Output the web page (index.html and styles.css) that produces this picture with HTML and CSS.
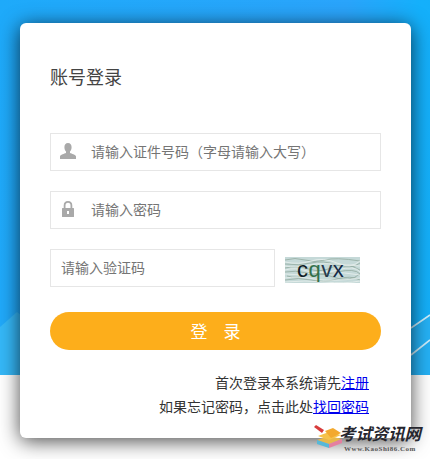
FILE: index.html
```html
<!DOCTYPE html>
<html lang="zh-CN">
<head>
    <meta charset="UTF-8">
    <meta name="viewport" content="width=device-width, initial-scale=1.0">
    <title>账号登录</title>
    <link rel="stylesheet" href="styles.css">
</head>
<body>
    <div class="page">
        <!-- Background streaks -->
        <svg class="streaks" width="430" height="375" viewBox="0 0 430 375">
            <polygon points="0,327 17,312 40,330 40,375 0,375" fill="#35b8f8"/>
            <polygon points="411,375 411,330 430,316 430,375" fill="#25b1f5"/>
            <path d="M411 328 L430 315" stroke="#cfeefc" stroke-width="1.6" fill="none"/>
            <path d="M411 355 L430 340" stroke="#cfeefc" stroke-width="1.6" fill="none"/>
        </svg>

        <div class="card">
            <h1 class="title">账号登录</h1>

            <div class="field">
                <svg class="field-icon" width="18" height="18" viewBox="0 0 18 18">
                    <path fill="#a9a9a9" d="M8 0c2.400 0 3.600 1.800 3.600 4.200 0 1.800-.7 3.300-1.600 4.300V10c1.700.8 5.400 1.400 6 3.300V16H0v-2.700c.6-1.900 4.300-2.500 6-3.300V8.500C5.100 7.500 4.400 6 4.400 4.200 4.400 1.800 5.600 0 8 0z"/>
                </svg>
                <span class="placeholder">请输入证件号码（字母请输入大写）</span>
            </div>

            <div class="field">
                <svg class="field-icon" width="18" height="18" viewBox="0 0 18 18">
                    <path fill="none" stroke="#a9a9a9" stroke-width="1.800" d="M4.600 7.500V4.600C4.600 2.200 6 .9 8 .9s3.400 1.300 3.400 3.700v2.900"/>
                    <path fill="#a9a9a9" fill-rule="evenodd" d="M2.600 7h10.800c.4 0 .6.200.6.600v7.800c0 .4-.2.600-.6.600H2.600c-.4 0-.6-.2-.6-.6V7.600c0-.4.200-.6.600-.6zM7 10v3h2v-3z"/>
                </svg>
                <span class="placeholder">请输入密码</span>
            </div>

            <div class="code-row">
                <div class="field code-field">
                    <span class="placeholder">请输入验证码</span>
                </div>
                <div class="captcha">
                    <svg class="captcha-noise" width="75" height="26" viewBox="0 0 75 26">
                        <path stroke="#93ab9f" stroke-width="0.8" fill="none" d="M0 3q10-3 20 0t20 0 35 1M0 7q14 2 26-1t26 2 23-2M0 11q12-3 24 1t24-2 27 3M0 15q10-2 22 1t30-1 23 2M2 19q10 3 20-1t26 2 27-3M0 23q14-3 26 0t26-1 23 1"/>
                        <path stroke="#e8f0ee" stroke-width="0.8" fill="none" d="M0 5q14 3 26-1t26 2 23-2M0 9q10 2 24-1t51 1M0 13q10-3 22 1t30-1 23 2M0 17q14 2 28-1t47 2M0 21q12-2 30 1t45-1M0 25q20-2 40 0t35-1"/>
                    </svg>
                    <span class="captcha-text"><span class="c1">c</span><span class="c2">q</span><span class="c3">v</span><span class="c4">x</span></span>
                </div>
            </div>

            <button class="login-btn" type="button"><span>登</span><span>录</span></button>

            <div class="links">
                <p>首次登录本系统请先<a href="#">注册</a></p>
                <p>如果忘记密码，点击此处<a href="#">找回密码</a></p>
            </div>
        </div>

        <!-- Watermark -->
        <div class="watermark">
            <svg class="wm-logo" width="30" height="23" viewBox="0 0 30 23">
                <polygon points="3,15 15,11 28,14 15,19" fill="#e8b84a"/>
                <polygon points="3,15 15,19 15,23 3,19" fill="#57b8d8"/>
                <polygon points="15,19 28,14 28,18 15,23" fill="#e57fa0"/>
                <polygon points="4,11 15,7 27,10 15,15" fill="#f6c24a"/>
                <polygon points="11,6 19,3 27,8 17,13" fill="#f3a92e"/>
                <polygon points="0,2 2,0 10,5 8,8" fill="#d83b3b"/>
            </svg>
            <div class="wm-text">
                <span class="wm-name">考试资讯网</span>
                <span class="wm-url">Www.KaoShi86.Com</span>
            </div>
        </div>
    </div>
</body>
</html>
```

FILE: styles.css
```css
body {
    margin: 0;
    font-family: "Noto Sans CJK SC", "Liberation Sans", sans-serif;
    background-color: #fff;
}

.page {
    position: relative;
    width: 430px;
    height: 459px;
    overflow: hidden;
    padding: 23px 19px 0 20px;
    box-sizing: border-box;
    background: linear-gradient(100deg, #1eaafa 0%, #2aa4fb 70%, #14b0fb 85%, #14aff8 100%) top / 100% 375px no-repeat;
}

.streaks {
    position: absolute;
    left: 0;
    top: 0;
}

.card {
    position: relative;
    height: 415px;
    box-sizing: border-box;
    padding: 41px 30px 0;
    background-color: #fff;
    border-radius: 6px;
    box-shadow: 0 3px 20px rgba(0, 0, 0, 0.72);
}

.title {
    margin: 0 0 45px;
    height: 24px;
    font-size: 18px;
    font-weight: 400;
    line-height: 24px;
    color: #444;
}

.field {
    display: flex;
    align-items: center;
    height: 38px;
    margin-bottom: 20px;
    padding-left: 9px;
    box-sizing: border-box;
    border: 1px solid #e6e6e6;
}

.field-icon {
    flex: none;
    margin-right: 13px;
}

.placeholder {
    margin-bottom: 2px;
    font-size: 14px;
    color: #757575;
}

.code-row {
    display: flex;
    align-items: flex-start;
    margin-bottom: 25px;
}

.code-field {
    width: 225px;
    margin-bottom: 0;
    padding-left: 10px;
}

.captcha {
    position: relative;
    display: flex;
    align-items: center;
    justify-content: center;
    width: 75px;
    height: 26px;
    margin: 8px 0 0 10px;
    background-color: #c5d9d8;
}

.captcha-noise {
    position: absolute;
    left: 0;
    top: 0;
}

.captcha-text {
    position: relative;
    margin-right: 4px;
    font-family: "Liberation Sans", sans-serif;
    font-size: 22px;
    letter-spacing: 0.5px;
    line-height: 26px;
}

.c1 { color: #0e1c26; }
.c2 { color: #33704a; }
.c3 { color: #263a4e; }
.c4 { color: #142a46; }

.login-btn {
    display: flex;
    align-items: center;
    justify-content: center;
    gap: 16px;
    width: 100%;
    height: 38px;
    padding: 0 0 2px;
    border: none;
    border-radius: 19px;
    background-color: #fdae1b;
    color: #fff;
    font-family: inherit;
    font-size: 17px;
}

.links {
    margin-top: 20px;
    padding-right: 12px;
    text-align: right;
    font-size: 14px;
    line-height: 24px;
    color: #333;
}

.links p {
    margin: 0;
}

.links a {
    color: #0000ee;
}

.watermark {
    position: absolute;
    left: 314px;
    top: 424px;
    display: flex;
    align-items: flex-start;
}

.wm-logo {
    flex: none;
    margin-top: 1px;
    margin-right: -5px;
}

.wm-text {
    display: flex;
    flex-direction: column;
    align-items: center;
}

.wm-name {
    font-size: 16.400px;
    font-weight: 700;
    font-style: italic;
    line-height: 18px;
    color: #26262e;
}

.wm-url {
    margin-top: 3px;
    font-family: "Liberation Serif", serif;
    font-size: 7px;
    font-weight: 700;
    line-height: 8px;
    letter-spacing: 0.5px;
    color: #555;
}
```
